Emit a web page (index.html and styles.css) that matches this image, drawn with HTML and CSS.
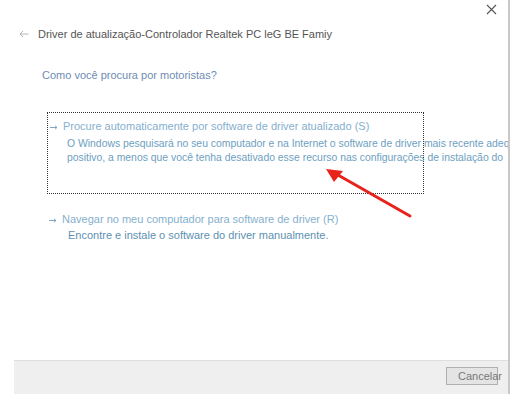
FILE: index.html
```html
<!DOCTYPE html>
<html lang="pt">
<head>
<meta charset="utf-8">
<title>Driver</title>
<link rel="stylesheet" href="styles.css">
</head>
<body>
<div class="window">
  <div class="topbar">
    <svg class="close" width="11" height="11" viewBox="0 0 11 11"><path d="M1 1 L10 10 M10 1 L1 10" stroke="#555" stroke-width="1.1" fill="none"/></svg>
  </div>
  <div class="title-row">
    <svg class="back" width="10" height="8" viewBox="0 0 10 8"><path d="M9.5 4 H1 M4 1 L1 4 L4 7" stroke="#b5b5b5" stroke-width="1" fill="none"/></svg>
    <span class="title">Driver de atualização-Controlador Realtek PC leG BE Famiy</span>
  </div>
  <div class="question">Como você procura por motoristas?</div>
  <div class="option focused">
    <div class="opt-head">
      <svg class="small-arrow" width="8" height="5" viewBox="0 0 8 5"><path d="M0 2.5 H7 M5 0.8 L7 2.5 L5 4.2" stroke="#7fa8c8" stroke-width="1" fill="none"/></svg>
      <span class="opt-title">Procure automaticamente por software de driver atualizado (S)</span>
    </div>
    <div class="opt-desc">
      <div class="line">O Windows pesquisará no seu computador e na Internet o software de driver mais recente adequado</div>
      <div class="line">positivo, a menos que você tenha desativado esse recurso nas configurações de instalação do</div>
    </div>
  </div>
  <div class="option second">
    <div class="opt-head">
      <svg class="small-arrow" width="8" height="5" viewBox="0 0 8 5"><path d="M0 2.5 H7 M5 0.8 L7 2.5 L5 4.2" stroke="#7fa8c8" stroke-width="1" fill="none"/></svg>
      <span class="opt-title">Navegar no meu computador para software de driver (R)</span>
    </div>
    <div class="opt-desc2">Encontre e instale o software do driver manualmente.</div>
  </div>
  <div class="spacer"></div>
  <div class="footer">
    <div class="btn">Cancelar</div>
  </div>
  <svg class="red-arrow" width="510" height="394" viewBox="0 0 510 394">
    <path d="M410 216 L338 175" stroke="#e8221c" stroke-width="3" stroke-linecap="round" fill="none"/>
    <path d="M326 169 L343 171 L334 182 Z" fill="#e8221c"/>
  </svg>
</div>
</body>
</html>
```

FILE: styles.css
```css
html, body {
  margin: 0;
  padding: 0;
  background: #fff;
}
.window {
  position: relative;
  width: 508px;
  height: 394px;
  border-right: 2px solid #c8c8c8;
  overflow: hidden;
  display: flex;
  flex-direction: column;
  font-family: "Liberation Sans", Arial, sans-serif;
  background: #fff;
}
.topbar {
  height: 24px;
  display: flex;
  justify-content: flex-end;
  align-items: flex-start;
  padding-right: 11px;
}
.close {
  margin-top: 4px;
}
.title-row {
  display: flex;
  align-items: center;
  gap: 9px;
  padding-left: 19px;
  height: 20px;
}
.title {
  font-size: 11px;
  color: #555;
  white-space: nowrap;
}
.question {
  margin-top: 23px;
  padding-left: 42px;
  font-size: 11px;
  color: #6f8db3;
  white-space: nowrap;
  height: 16px;
  line-height: 16px;
}
.option {
  margin-left: 47px;
  white-space: nowrap;
}
.focused {
  margin-top: 29px;
  width: 377px;
  height: 82px;
  border: 1px dotted #333;
  padding-top: 6px;
  box-sizing: border-box;
}
.opt-head {
  display: flex;
  align-items: center;
  gap: 5px;
  padding-left: 2px;
  height: 14px;
}
.small-arrow {
  margin-top: 3px;
}
.opt-title {
  font-size: 11px;
  color: #86b0cf;
}
.opt-desc {
  margin-left: 19px;
  margin-top: 4px;
  font-size: 10.4px;
  line-height: 14px;
  color: #6ea0c0;
  width: 442px;
  overflow: hidden;
}
.line {
  white-space: nowrap;
}
.second {
  margin-top: 18px;
}
.opt-desc2 {
  margin-left: 21px;
  margin-top: 3px;
  font-size: 11px;
  color: #5e90b2;
}
.spacer {
  flex: 1;
}
.footer {
  margin-left: 14px;
  height: 33px;
  background: #efefef;
  border-top: 1px solid #dedede;
  display: flex;
  justify-content: flex-end;
  align-items: flex-start;
  padding-right: 10px;
}
.btn {
  margin-top: 6px;
  width: 52px;
  height: 18px;
  box-sizing: border-box;
  border: 1px solid #b0b0b0;
  background: #e4e4e4;
  font-size: 11px;
  color: #777;
  line-height: 16px;
  padding-left: 11px;
  white-space: nowrap;
  overflow: visible;
}
.red-arrow {
  position: absolute;
  left: 0;
  top: 0;
  pointer-events: none;
}
```
